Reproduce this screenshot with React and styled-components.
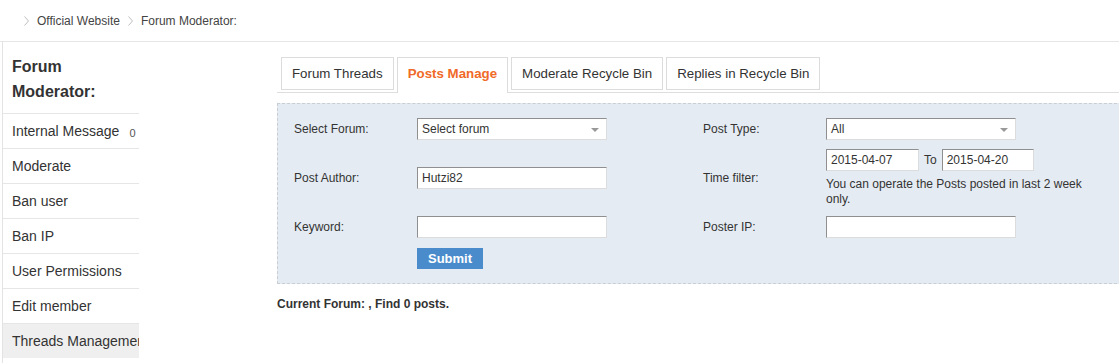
import React from 'react';
import styled, { createGlobalStyle } from 'styled-components';

const GlobalStyle = createGlobalStyle`
  html, body {
    margin: 0;
    padding: 0;
    background: #fff;
    overflow: hidden;
  }
  body {
    font-family: "Liberation Sans", Arial, sans-serif;
    color: #333;
  }
`;

const Page = styled.div`
  width: 1119px;
  height: 363px;
  overflow: hidden;
`;

const Breadcrumb = styled.div`
  height: 41px;
  border-bottom: 1px solid #e6e6e6;
  display: flex;
  align-items: center;
  padding-left: 24px;
  font-size: 12px;
  color: #444;
  gap: 8px;
`;

const Crumb = styled.span`
  display: flex;
  align-items: center;
  gap: 8px;
`;

const Chevron = () => (
  <svg width="5" height="10" viewBox="0 0 5 10">
    <path d="M0.5 0.5 L4.5 5 L0.5 9.5" fill="none" stroke="#b5b5b5" strokeWidth="0.9" />
  </svg>
);

const Layout = styled.div`
  display: flex;
  align-items: flex-start;
`;

const Sidebar = styled.div`
  margin-left: 2px;
  width: 136px;
  flex: none;
  border-left: 1px solid #e3e3e3;
  min-height: 330px;
`;

const SideTitle = styled.div`
  padding: 12px 0 9px 9px;
  font-size: 16px;
  font-weight: bold;
  line-height: 25px;
  color: #333;
`;

const SideItem = styled.div`
  height: 34px;
  border-top: 1px solid #e6e6e6;
  display: flex;
  align-items: center;
  padding-left: 9px;
  font-size: 14px;
  color: #333;
  white-space: nowrap;
  overflow: hidden;
  background: ${p => (p.$active ? '#efefef' : 'transparent')};
`;

const Count = styled.span`
  font-size: 11px;
  color: #555;
  margin-left: 10px;
  margin-top: 4px;
`;

const Main = styled.div`
  margin-left: 138px;
  width: 860px;
  flex: none;
  padding-top: 15px;
`;

const Tabs = styled.div`
  display: flex;
  gap: 3px;
  padding-left: 4px;
  border-bottom: 1px solid #dedede;
  height: 35px;
`;

const Tab = styled.div`
  height: ${p => (p.$active ? '35px' : '31px')};
  padding: 0 10px;
  border: 1px solid #dcdcdc;
  border-bottom: ${p => (p.$active ? 'none' : '1px solid #dcdcdc')};
  background: #fff;
  display: flex;
  align-items: flex-start;
  line-height: 31px;
  font-size: 13.3px;
  font-weight: ${p => (p.$active ? 'bold' : 'normal')};
  color: ${p => (p.$active ? '#f06a28' : '#333')};
  margin-bottom: ${p => (p.$active ? '-1px' : '0')};
  position: relative;
  z-index: ${p => (p.$active ? 1 : 0)};
`;

const Panel = styled.div`
  margin-top: 10px;
  background: #e5ebf2;
  border: 1px dashed #c9ced4;
  padding: 14px 0 14px 16px;
  display: grid;
  grid-template-columns: 123px 286px 123px auto;
  row-gap: 9px;
  align-items: center;
  font-size: 12px;
`;

const Label = styled.div`
  color: #333;
`;

const Field = styled.div`
  display: flex;
  flex-direction: column;
  align-items: flex-start;
`;

const Input = styled.div`
  box-sizing: border-box;
  width: ${p => p.$w || 190}px;
  height: 22px;
  background: #fff;
  border: 1px solid;
  border-color: #8f8f8f #dcdcdc #dcdcdc #8f8f8f;
  padding-left: 4px;
  display: flex;
  align-items: center;
  font-size: 12px;
  color: #333;
  position: relative;
`;

const Select = styled(Input)`
  &::after {
    content: '';
    position: absolute;
    right: 7px;
    top: 9px;
    border-left: 4px solid transparent;
    border-right: 4px solid transparent;
    border-top: 4px solid #999;
  }
`;

const DateRow = styled.div`
  display: flex;
  align-items: center;
  gap: 5px;
`;

const Help = styled.div`
  width: 272px;
  margin-top: 6px;
  line-height: 15px;
  color: #333;
`;

const Submit = styled.button`
  width: 66px;
  height: 21px;
  border: none;
  background: #4a8ccb;
  color: #fff;
  font-family: "Liberation Sans", Arial, sans-serif;
  font-size: 13px;
  font-weight: bold;
  padding: 0;
  margin-top: 1px;
`;

const Summary = styled.div`
  margin-top: 13px;
  font-size: 12px;
  font-weight: bold;
  color: #333;
`;

const sideItems = ['Moderate', 'Ban user', 'Ban IP', 'User Permissions', 'Edit member'];
const tabs = ['Forum Threads', 'Posts Manage', 'Moderate Recycle Bin', 'Replies in Recycle Bin'];

export default function App() {
  return (
    <Page>
      <GlobalStyle />
      <Breadcrumb>
        <Crumb><Chevron />Official Website</Crumb>
        <Crumb><Chevron />Forum Moderator:</Crumb>
      </Breadcrumb>
      <Layout>
        <Sidebar>
          <SideTitle>Forum<br />Moderator:</SideTitle>
          <SideItem>Internal Message<Count>0</Count></SideItem>
          {sideItems.map(item => <SideItem key={item}>{item}</SideItem>)}
          <SideItem $active>Threads Management</SideItem>
        </Sidebar>
        <Main>
          <Tabs>
            {tabs.map(t => <Tab key={t} $active={t === 'Posts Manage'}>{t}</Tab>)}
          </Tabs>
          <Panel>
            <Label>Select Forum:</Label>
            <Select>Select forum</Select>
            <Label>Post Type:</Label>
            <Select>All</Select>

            <Label>Post Author:</Label>
            <Input>Hutzi82</Input>
            <Label>Time filter:</Label>
            <Field>
              <DateRow>
                <Input $w={93}>2015-04-07</Input>
                To
                <Input $w={92}>2015-04-20</Input>
              </DateRow>
              <Help>You can operate the Posts posted in last 2 week only.</Help>
            </Field>

            <Label>Keyword:</Label>
            <Input />
            <Label>Poster IP:</Label>
            <Input />

            <div />
            <div><Submit>Submit</Submit></div>
          </Panel>
          <Summary>Current Forum: , Find 0 posts.</Summary>
        </Main>
      </Layout>
    </Page>
  );
}
